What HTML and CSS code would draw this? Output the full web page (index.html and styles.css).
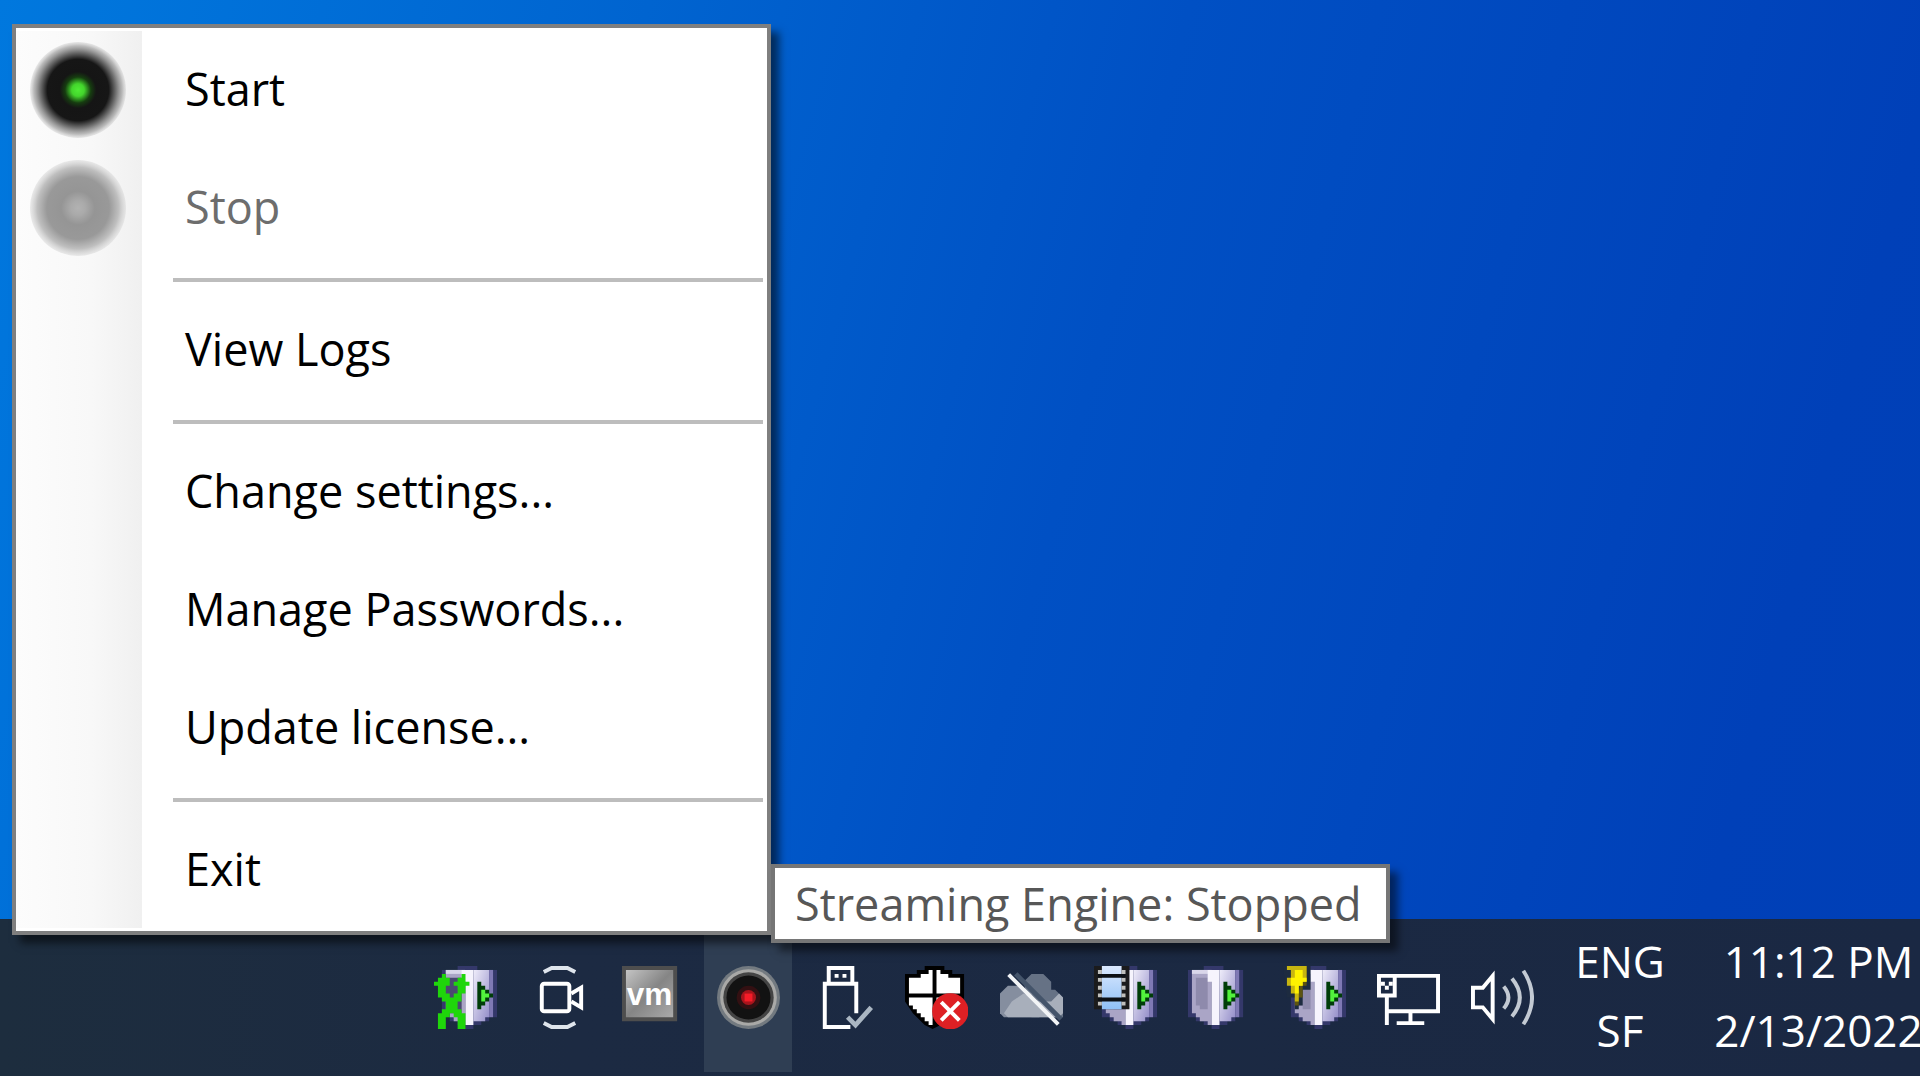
FILE: index.html
```
<!DOCTYPE html>
<html lang="en">
<head>
  <meta charset="utf-8">
  <title>Streaming Engine</title>
  <link rel="stylesheet" href="styles.css">
</head>
<body>
  <!-- shared shapes -->
  <svg class="defs" width="0" height="0">
    <defs>
      <radialGradient id="led-green">
        <stop offset="0" stop-color="#4fec35"/>
        <stop offset="0.13" stop-color="#43d52c"/>
        <stop offset="0.27" stop-color="#163d10"/>
        <stop offset="0.38" stop-color="#151515"/>
        <stop offset="0.64" stop-color="#161616"/>
        <stop offset="0.8" stop-color="#777"/>
        <stop offset="0.92" stop-color="#aaa" stop-opacity="0.8"/>
        <stop offset="1" stop-color="#ccc" stop-opacity="0.4"/>
      </radialGradient>
      <radialGradient id="led-off">
        <stop offset="0" stop-color="#b2b2b2"/>
        <stop offset="0.15" stop-color="#aaa"/>
        <stop offset="0.35" stop-color="#959595"/>
        <stop offset="0.65" stop-color="#999"/>
        <stop offset="0.85" stop-color="#bfbfbf"/>
        <stop offset="1" stop-color="#d8d8d8" stop-opacity="0.5"/>
      </radialGradient>
      <linearGradient id="side" x1="0" y1="0" x2="1" y2="1">
        <stop offset="0" stop-color="#efedfa"/>
        <stop offset="1" stop-color="#938dc8"/>
      </linearGradient>
      <linearGradient id="vm-fill" x1="0" y1="0" x2="1" y2="1">
        <stop offset="0" stop-color="#c4c4c4"/>
        <stop offset="0.5" stop-color="#858585"/>
        <stop offset="1" stop-color="#aaa"/>
      </linearGradient>
      <linearGradient id="film-fill" x1="0" y1="0" x2="0" y2="1">
        <stop offset="0" stop-color="#dbe9ff"/>
        <stop offset="1" stop-color="#8fc0f5"/>
      </linearGradient>
      <g id="server">
        <path fill="#34386a" d="M0 1h4V0h5v1h5v12h-2v1h-2v1H8v1H6v-1H4v-1H2v-1H0z"/>
        <path fill="#aaa5c6" d="M1 1h5v14H5v-1H3v-1H2v-1H1z"/>
        <path fill="#8e8aac" d="M2 3h3v8H3v-1H2z"/>
        <path fill="#d9d6ea" d="M1 1h5v1H1z"/>
        <path fill="#f6f4fd" d="M5 1h3v14H6V4H5z"/>
        <path fill="url(#side)" d="M8 1h4v12h-1v1H8z"/>
        <path fill="#7f79b4" d="M12 1h1v12h-1z"/>
        <path fill="#003d08" d="M9 4h1v1h1v1h1v1h1v1h-1v1h-1v1h-1v1H9z"/>
        <path fill="#52f23c" d="M10 6h1v1h1v1h-1v1h-1z"/>
      </g>
    </defs>
  </svg>

  <div class="desktop">
    <div class="menu" role="menu">
      <button class="item" role="menuitem">
        <svg class="led" viewBox="0 0 24 24"><circle cx="12" cy="12" r="12" fill="url(#led-green)"/></svg>
        <span>Start</span>
      </button>
      <button class="item" role="menuitem" disabled>
        <svg class="led" viewBox="0 0 24 24"><circle cx="12" cy="12" r="12" fill="url(#led-off)"/></svg>
        <span>Stop</span>
      </button>
      <hr>
      <button class="item" role="menuitem">View Logs</button>
      <hr>
      <button class="item" role="menuitem">Change settings...</button>
      <button class="item" role="menuitem">Manage Passwords...</button>
      <button class="item" role="menuitem">Update license...</button>
      <hr>
      <button class="item" role="menuitem">Exit</button>
    </div>
    <div class="tooltip" role="tooltip">Streaming Engine: Stopped</div>
  </div>

  <div class="taskbar">
    <div class="tray">
      <button class="tray-button" aria-label="Server tools">
        <svg viewBox="0 0 16 16">
          <use href="#server" x="2"/>
          <path fill="#4a4a70" d="M3 3h4v9H3z"/>
          <path fill="#1fd60b" d="M2 2h1v1h1v2H3v2h1v1h1V7h1V5H5V4h1V3h1V2h1v2h1v1H8v2H7v2H6v2h1v1h1v4H6v-3H5v-1H4v1H3v3H1v-4h1v-1h1V9H2V8H1V5H0V4h1V3h1z"/>
        </svg>
      </button>
      <button class="tray-button" aria-label="Meet Now">
        <svg viewBox="0 0 16 16" fill="none" stroke="#fff">
          <rect x="3.5" y="4.5" width="7" height="7" rx="0.6"/>
          <path d="M11 7l2.5-1.5v5L11 9"/>
          <path d="M4 1.5l2-1h4l2 1M4 14.5l2 1h4l2-1" stroke="#dfe5ec"/>
        </svg>
      </button>
      <button class="tray-button" aria-label="VM tools">
        <svg viewBox="0 0 16 16">
          <path fill="#4e4e4e" d="M0 0h14v14H0z"/>
          <path fill="url(#vm-fill)" d="M1 1h12v12H1z"/>
          <text class="vm" x="7" y="10" text-anchor="middle">vm</text>
        </svg>
      </button>
      <button class="tray-button active" aria-label="Streaming Engine">
        <svg viewBox="0 0 16 16">
          <circle cx="8" cy="8" r="8" fill="#737a80"/>
          <circle cx="8" cy="8" r="7.2" fill="#a9a9a7"/>
          <circle cx="8" cy="8" r="6.4" fill="#444"/>
          <circle cx="8" cy="8" r="5.6" fill="#121212"/>
          <circle cx="8" cy="8" r="3" fill="#331012"/>
          <circle cx="8" cy="8" r="1.9" fill="#a8141c"/>
          <path fill="#f51c28" d="M7 7h2v2H7z"/>
        </svg>
      </button>
      <button class="tray-button" aria-label="Safely remove hardware">
        <svg viewBox="0 0 16 16">
          <path fill="#fff" fill-rule="evenodd" d="M4 0h7v4h1v8h-1V5H4v10h6v1H3V4h1zM5 1v3h5V1z"/>
          <path fill="#fff" d="M6 2h1v1H6zM8 2h1v1H8z"/>
          <path d="M9.3 13l2 2 4-4.5" fill="none" stroke="#aab6c2" stroke-width="1.2"/>
        </svg>
      </button>
      <button class="tray-button" aria-label="Windows Security">
        <svg viewBox="0 0 16 16">
          <path d="M5 0h5v1h2v1h3v8l-2 3-6 3-2-1-3-3-2-3V2h3V1h2z"/>
          <path fill="#fff" d="M4 2h2V1h1v6H1V3h3zM8 1h1v1h2v1h3v4H8zM1 8h6v7H6v-1H5v-1H4v-1H3v-1H2v-1H1zM8 8h6v2H8z"/>
          <circle cx="11.5" cy="11.5" r="4.6" fill="#de2024"/>
          <path d="M9.2 9.2l4.6 4.6M13.8 9.2l-4.6 4.6" stroke="#fff"/>
        </svg>
      </button>
      <button class="tray-button" aria-label="OneDrive">
        <svg viewBox="0 0 16 16">
          <path fill="#667285" d="M6 4l2-2h3l2 2v2h1l2 2v5H8z"/>
          <path fill="#858e9f" d="M0 7l2-2h3l3 2 2 6H1l-1-1z"/>
          <path fill="#a8afbb" d="M1 12l2-3 3-2 4 2h3l2-2 1 1v4l-1 1H2z"/>
          <path d="M4 2l11.5 11.5" stroke="#44546a" stroke-width="1.2"/>
          <path d="M2.2 2.2l12.6 12.6" stroke="#f2f4f6"/>
        </svg>
      </button>
      <button class="tray-button" aria-label="Media server">
        <svg viewBox="0 0 16 16">
          <use href="#server" x="2"/>
          <path fill="#1b1b1c" d="M0 0h9v11H0z"/>
          <path fill="url(#film-fill)" d="M2 0h5v11H2z"/>
          <path fill="#c0c0bd" d="M1 1h1v1H1zM7 1h1v1H7zM1 3h1v1H1zM7 3h1v1H7zM1 5h1v1H1zM7 5h1v1H7zM1 7h1v1H1zM7 7h1v1H7zM1 9h1v1H1zM7 9h1v1H7z"/>
          <path fill="#0c1015" d="M1 2h7v1H1zM1 8h7v1H1z"/>
        </svg>
      </button>
      <button class="tray-button" aria-label="Server">
        <svg viewBox="0 0 16 16"><use href="#server"/></svg>
      </button>
      <button class="tray-button" aria-label="Server power">
        <svg viewBox="0 0 16 16">
          <use href="#server" x="2"/>
          <path fill="#1d2b40" d="M0 0h7v6H5v4H4v1H3V8H1z"/>
          <path fill="#5d5410" d="M5 0h1v5H5v3H4v2H3V7h1z"/>
          <path fill="#c7b510" d="M1 0h5v4H5v1H4v4H3V7H2V5H1V3h1V1H1z"/>
          <path fill="#fff200" d="M3 1h2v2h1v1H5v1H4v2H3V5H2V3h1z"/>
        </svg>
      </button>
      <button class="tray-button" aria-label="Network">
        <svg viewBox="0 0 16 16">
          <path fill="#fff" fill-rule="evenodd" d="M0 2h16v10H9v2h3v1H5v-1h3v-2H3v3H2V8H0zM5 3v5H3v3h12V3zM1 3v4h3V3z"/>
          <path fill="#fff" d="M1 4h1v1H1zM3 4h1v1H3zM2 5h1v1H2z"/>
        </svg>
      </button>
      <button class="tray-button" aria-label="Volume">
        <svg viewBox="0 0 16 16" fill="none" stroke="#fff">
          <path d="M0.5 5.5H3l2.5-3v11l-2.5-3H0.5z"/>
          <path d="M8.3 5.2q2.4 2.8 0 5.6M10.4 3.2q4 4.8 0 9.6M13.3 1.2q4.4 6.8 0 13.6" stroke="#c3cad3"/>
        </svg>
      </button>
    </div>
    <div class="language">
      <span>ENG</span>
      <span>SF</span>
    </div>
    <div class="clock">
      <span>11:12 PM</span>
      <span>2/13/2022</span>
    </div>
  </div>
</body>
</html>
```
FILE: styles.css
```
* {
  box-sizing: border-box;
}
body {
  margin: 0;
  height: 100vh;
  padding-bottom: 4px;
  display: flex;
  flex-direction: column;
  overflow: hidden;
  background-color: #fff;
  font-family: "Open Sans", "Noto Sans", sans-serif;
  font-size: 45px;
}
button {
  padding: 0;
  border: none;
  background: none;
  font: inherit;
  color: inherit;
}
.defs {
  position: absolute;
}
.desktop {
  flex: 1;
  background: linear-gradient(105deg, #0078de 0%, #0064d0 30%, #0050c4 55%, #0040b8 90%, #003fb6 100%);
}

/* context menu */
.menu {
  position: absolute;
  z-index: 1;
  top: 24px;
  left: 12px;
  width: 759px;
  padding: 3px 4px 2px 0;
  border: 4px solid #7f7f7f;
  background: linear-gradient(90deg, #fcfcfc, #f8f8f8 60%, #f0f0f0) 0 3px / 126px calc(100% - 6px) no-repeat #fff;
  box-shadow: 8px 8px 8px rgba(0, 0, 0, 0.55);
}
.item {
  display: flex;
  align-items: center;
  width: 100%;
  height: 118px;
  padding-left: 169px;
  padding-bottom: 4px;
  color: #000;
}
.item:disabled {
  color: #6d6d6d;
}
.led {
  width: 96px;
  height: 96px;
  margin-top: 4px;
  margin-left: -155px;
  margin-right: 59px;
}
.menu hr {
  height: 4px;
  margin: 11px 0 9px 157px;
  border: none;
  background-color: #bdbdbd;
}
.tooltip {
  position: absolute;
  z-index: 2;
  top: 864px;
  left: 771px;
  padding: 0 24px 0 20px;
  border: 4px solid #767676;
  background-color: #fff;
  box-shadow: 8px 8px 8px rgba(0, 0, 0, 0.5);
  color: #575757;
  line-height: 71px;
}

/* taskbar */
.taskbar {
  display: flex;
  justify-content: flex-end;
  height: 157px;
  background: linear-gradient(90deg, #1d2d3e, #1c2a42 30%, #1a2843);
  color: #fff;
  font-size: 44px;
}
.tray {
  display: flex;
  justify-content: space-between;
  width: 1126px;
}
.tray-button {
  display: flex;
  justify-content: center;
  width: 88px;
  height: 153px;
  padding-top: 47px;
}
.tray-button svg {
  width: 63px;
  height: 63px;
}
.tray-button.active {
  background-color: #2f3e53;
}
.vm {
  font: bold 8px "Liberation Sans", sans-serif;
  fill: #fff;
}
.language,
.clock {
  display: flex;
  flex-direction: column;
  align-items: center;
  line-height: 69px;
  padding-top: 8px;
}
.language {
  width: 146px;
}
.clock {
  width: 227px;
  padding-left: 24px;
}
```
